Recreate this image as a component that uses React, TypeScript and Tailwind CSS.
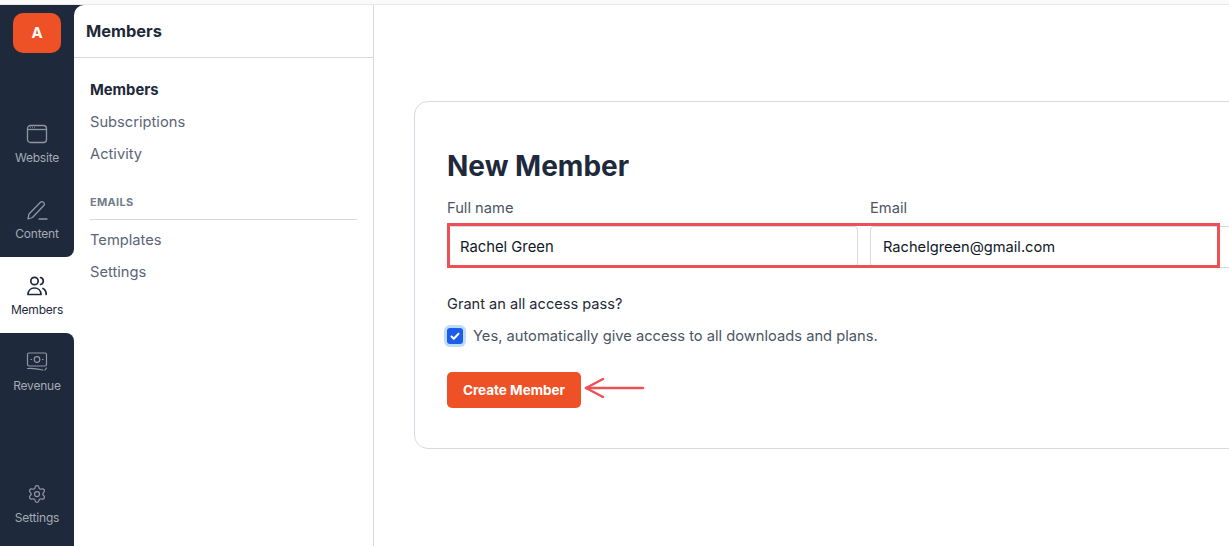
import React from 'react';
import { Settings } from 'lucide-react';

const font = { fontFamily: 'Inter, "Liberation Sans", sans-serif' };

function RailItem({ label, icon, active = false }: { label: string; icon: React.ReactNode; active?: boolean }) {
  return (
    <div className={`flex h-[76px] flex-col items-center pt-[17px] ${active ? 'text-[#1e293b]' : 'text-[#8f97a3]'}`}>
      <div className="flex h-[24px] w-[24px] items-center justify-center">{icon}</div>
      <span className={`mt-[4px] text-[12px] leading-[16px] tracking-[-0.2px] ${active ? 'text-[#1e293b]' : 'text-[#a5abb5]'}`}>{label}</span>
    </div>
  );
}

const WebsiteIcon = (
  <svg width="22" height="20" viewBox="0 0 22 20" fill="none" stroke="currentColor" strokeWidth="1.3">
    <rect x="1.5" y="1.5" width="19" height="17" rx="3" />
    <path d="M1.5 5.5h19" />
    <path d="M4 3.5h.6M6.2 3.5h.6M8.4 3.5h.6" />
  </svg>
);

const ContentIcon = (
  <svg width="22" height="22" viewBox="0 0 22 22" fill="none" stroke="currentColor" strokeWidth="1.3" strokeLinecap="round" strokeLinejoin="round">
    <path d="M2 20l1-5L14.5 3.2a2 2 0 0 1 2.9 0l.4.4a2 2 0 0 1 0 2.9L6.5 18.5 2 20z" />
    <path d="M13 20h8" />
  </svg>
);

const MembersIcon = (
  <svg width="20" height="20" viewBox="0 0 20 20" fill="none" stroke="currentColor" strokeWidth="1.7" strokeLinecap="round" strokeLinejoin="round">
    <circle cx="7.5" cy="5" r="3.700" />
    <path d="M1 18.500c0-4 2.800-6.500 6.500-6.500s6.500 2.500 6.500 6.500H1z" />
    <path d="M13.500 1.500c1.800.4 2.800 1.800 2.800 3.500s-1 3.100-2.800 3.500" />
    <path d="M16 12.500c2 .9 3.200 3 3.200 6" />
  </svg>
);

const RevenueIcon = (
  <svg width="22" height="20" viewBox="0 0 22 20" fill="none" stroke="currentColor" strokeWidth="1.2" strokeLinecap="round">
    <rect x="1.500" y="1" width="19" height="13" rx="1.500" />
    <circle cx="11" cy="7.500" r="2.800" />
    <path d="M5 7.500h.5M16.500 7.500h.5" />
    <path d="M1.500 16.500c5-.5 11 .5 15.500 1.500M19 18l1.500-2" />
  </svg>
);

function NavLink({ children, active = false }: { children: React.ReactNode; active?: boolean }) {
  return (
    <div className={`h-[32px] leading-[32px] ${active ? 'text-[14.8px] font-bold text-[#1e293b]' : 'text-[14.700px] text-[#5b6676]'}`}>{children}</div>
  );
}

export default function App() {
  return (
    <div className="flex h-[546px] w-[1229px] flex-col overflow-hidden bg-white" style={font}>
      <div className="h-[5px] border-b border-[#e5e7eb] bg-[#fafafa]" />
      <div className="flex min-h-0 flex-1">
        <aside className="flex w-[74px] flex-col">
          <div className="flex h-[252px] flex-col rounded-br-[8px] bg-[#1e293b]">
            <div className="mx-[13px] mt-[8px] flex h-[40px] w-[48px] items-center justify-center rounded-[10px] bg-[#ee5125] text-[15px] font-bold text-white">A</div>
            <div className="mt-[52px]">
              <RailItem label="Website" icon={WebsiteIcon} />
              <RailItem label="Content" icon={ContentIcon} />
            </div>
          </div>
          <RailItem label="Members" icon={MembersIcon} active />
          <div className="flex flex-1 flex-col rounded-tr-[8px] bg-[#1e293b]">
            <RailItem label="Revenue" icon={RevenueIcon} />
            <div className="mt-auto mb-[5px]">
              <RailItem label="Settings" icon={<Settings size={20} strokeWidth={1.5} />} />
            </div>
          </div>
        </aside>

        <div className="w-[300px] bg-[#1e293b]">
          <nav className="h-full rounded-tl-[10px] border-r border-[#d5d8df] bg-white">
            <div className="flex h-[53px] items-center border-b border-[#d5d8df] pl-[12px] text-[16.400px] font-bold text-[#1f2937]">Members</div>
            <div className="pt-[16px] pr-[16px] pl-[16px]">
              <NavLink active>Members</NavLink>
              <NavLink>Subscriptions</NavLink>
              <NavLink>Activity</NavLink>
              <div className="mt-[25px] border-b border-[#d5d8df] pb-[10px] text-[11px] leading-[14px] font-bold tracking-[0.3px] text-[#717c8c]">EMAILS</div>
              <div className="mt-[4px]">
                <NavLink>Templates</NavLink>
                <NavLink>Settings</NavLink>
              </div>
            </div>
          </nav>
        </div>

        <main className="min-w-0 flex-1 pt-[96px] pl-[40px]">
          <section className="relative h-[348px] w-[900px] rounded-[14px] border border-[#d8dae3] pt-[46px] pl-[32px]">
            <h1 className="text-[28px] leading-[36px] font-bold text-[#1e293b]">New Member</h1>
            <div className="mt-[14px] flex">
              <div className="w-[423px]">
                <label className="block text-[14.700px] leading-[20px] text-[#4b5563]">Full name</label>
                <div className="mt-[8px] flex h-[42px] w-[411px] items-center rounded-[4px] border border-[#d5d8df] pt-[1px] pl-[12px] text-[14.800px] text-[#111827]">Rachel Green</div>
              </div>
              <div className="flex-1">
                <label className="block text-[14.700px] leading-[20px] text-[#4b5563]">Email</label>
                <div className="mt-[8px] flex h-[42px] w-full items-center rounded-[4px] border border-[#d5d8df] pt-[1px] pl-[12px] text-[14.650px] text-[#111827]">Rachelgreen@gmail.com</div>
              </div>
            </div>
            <div className="mt-[26px] text-[14.600px] leading-[20px] text-[#1f2937]">Grant an all access pass?</div>
            <div className="mt-[12px] flex items-center">
              <span className="flex h-[16px] w-[16px] items-center justify-center rounded-[3px] bg-[#1d5ee8] ring-3 ring-[#bfdbfe]">
                <svg width="10" height="10" viewBox="0 0 10 10" fill="none" stroke="white" strokeWidth="2" strokeLinecap="round" strokeLinejoin="round">
                  <path d="M1.500 5.500l2.300 2.200 4.700-5" />
                </svg>
              </span>
              <span className="ml-[10px] text-[14.700px] leading-[20px] text-[#4b5563]">Yes, automatically give access to all downloads and plans.</span>
            </div>
            <div className="mt-[26px] flex h-[36px] w-[134px] items-center justify-center rounded-[5px] bg-[#ee5125] text-[13.500px] font-bold text-white">Create Member</div>

            {/* annotations */}
            <div className="absolute top-[121px] left-[32px] h-[45px] w-[773px] border-[3px] border-[#ee5056]" />
            <svg className="absolute top-[274px] left-[168px]" width="62" height="24" viewBox="0 0 62 24" fill="none" stroke="#ee5056" strokeWidth="2.500" strokeLinecap="round" strokeLinejoin="round">
              <path d="M3 12h57" />
              <path d="M20 3L3 12l17 9" />
            </svg>
          </section>
        </main>
      </div>
    </div>
  );
}
